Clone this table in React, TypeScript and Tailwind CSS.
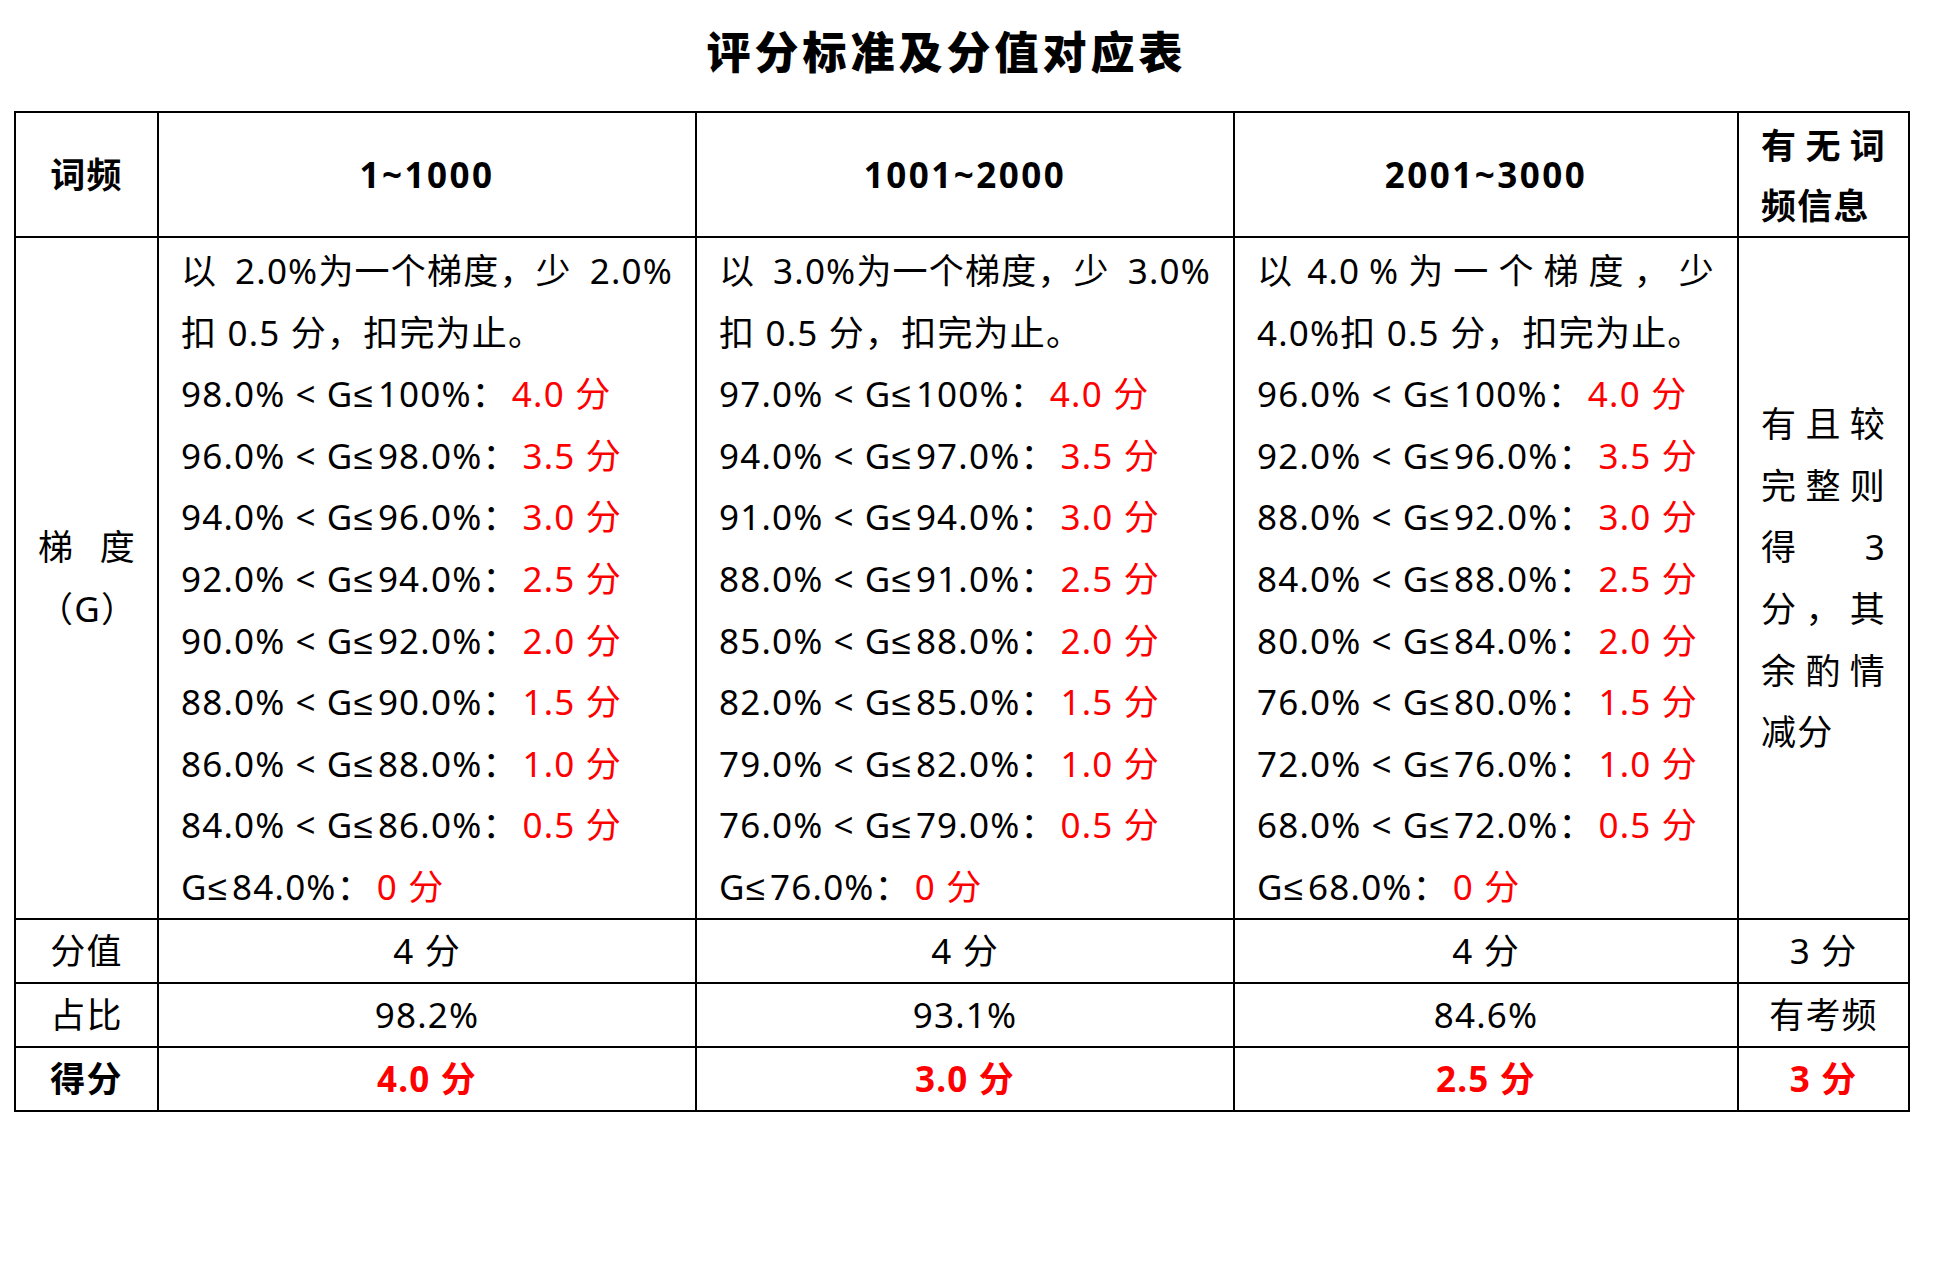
import React from "react";

type Line = { lo?: string; hi: string; score: string };

const gradeLines = (rows: [string, string][], last: string): Line[] => [
  ...rows.map(([lo, hi], i) => ({
    lo,
    hi,
    score: `${(4 - i * 0.5).toFixed(1)} 分`,
  })),
  { hi: last, score: "0 分" },
];

const col1 = gradeLines(
  [
    ["98.0", "100"],
    ["96.0", "98.0"],
    ["94.0", "96.0"],
    ["92.0", "94.0"],
    ["90.0", "92.0"],
    ["88.0", "90.0"],
    ["86.0", "88.0"],
    ["84.0", "86.0"],
  ],
  "84.0"
);

const col2 = gradeLines(
  [
    ["97.0", "100"],
    ["94.0", "97.0"],
    ["91.0", "94.0"],
    ["88.0", "91.0"],
    ["85.0", "88.0"],
    ["82.0", "85.0"],
    ["79.0", "82.0"],
    ["76.0", "79.0"],
  ],
  "76.0"
);

const col3 = gradeLines(
  [
    ["96.0", "100"],
    ["92.0", "96.0"],
    ["88.0", "92.0"],
    ["84.0", "88.0"],
    ["80.0", "84.0"],
    ["76.0", "80.0"],
    ["72.0", "76.0"],
    ["68.0", "72.0"],
  ],
  "68.0"
);

const cell = "border-2 border-black px-[22px] text-center align-middle";
const red = "text-[#ff0000]";

const GradeCell = ({ head, lines }: { head: React.ReactNode; lines: Line[] }) => (
  <td className="border-2 border-black px-[22px] pt-[2px] align-top text-left">
    {head}
    {lines.map((l) => (
      <div key={l.hi + l.score} className="whitespace-nowrap">
        {l.lo && (
          <>
            {l.lo}%<span className="px-[10px]">&lt;</span>
          </>
        )}
        G<span className="pr-[4px]">≤</span>
        {l.hi}%<span className="inline-block w-[40px]">：</span>
        <span className={red}>{l.score}</span>
      </div>
    ))}
  </td>
);

const Spread = ({ items, className = "" }: { items: string[]; className?: string }) => (
  <div className={`flex justify-between ${className}`}>
    {items.map((t, i) => (
      <span key={i}>{t}</span>
    ))}
  </div>
);

export default function App() {
  return (
    <div className="w-[1960px] h-[1265px] bg-white text-black font-['Noto_Sans','Liberation_Sans','Noto_Sans_CJK_SC',sans-serif] text-[35px] leading-[61.6px] tracking-[1.2px]">
      <h1 className="pr-[67px] text-center font-['Noto_Sans_CJK_SC',sans-serif] text-[44px] font-black leading-[100px] tracking-[4px]">
        评分标准及分值对应表
      </h1>

      <table className="mt-[11px] ml-[14px] w-[1896px] table-fixed border-collapse">
        <colgroup>
          <col className="w-[143px]" />
          <col className="w-[538px]" />
          <col className="w-[538px]" />
          <col className="w-[504px]" />
          <col className="w-[171px]" />
        </colgroup>
        <tbody>
          <tr className="h-[125px] font-bold">
            <td className={cell}>词频</td>
            <td className={`${cell} tracking-[2.5px]`}>1~1000</td>
            <td className={`${cell} tracking-[2.5px]`}>1001~2000</td>
            <td className={`${cell} tracking-[2.5px]`}>2001~3000</td>
            <td className="border-2 border-black px-[22px] pt-[3px] text-left align-middle leading-[60px]">
              <Spread items={["有", "无", "词"]} />
              <div>频信息</div>
            </td>
          </tr>

          <tr className="h-[682px]">
            <td className={cell}>
              <Spread items={["梯", "度"]} className="mx-auto w-[98px]" />
              <div>（G）</div>
            </td>
            <GradeCell
              head={
                <>
                  <Spread items={["以", "2.0%为一个梯度，少", "2.0%"]} />
                  <div>扣 0.5 分，扣完为止。</div>
                </>
              }
              lines={col1}
            />
            <GradeCell
              head={
                <>
                  <Spread items={["以", "3.0%为一个梯度，少", "3.0%"]} />
                  <div>扣 0.5 分，扣完为止。</div>
                </>
              }
              lines={col2}
            />
            <GradeCell
              head={
                <>
                  <div className="flex">
                    <span className="mr-[14px]">以</span>
                    <Spread
                      items={["4.0", "%", "为", "一", "个", "梯", "度", "，", "少"]}
                      className="flex-1"
                    />
                  </div>
                  <div>4.0%扣 0.5 分，扣完为止。</div>
                </>
              }
              lines={col3}
            />
            <td className="border-2 border-black px-[22px] text-left align-middle">
              <Spread items={["有", "且", "较"]} />
              <Spread items={["完", "整", "则"]} />
              <Spread items={["得", "3"]} />
              <Spread items={["分", "，", "其"]} />
              <Spread items={["余", "酌", "情"]} />
              <div>减分</div>
            </td>
          </tr>

          <tr className="h-[64px]">
            <td className={cell}>分值</td>
            <td className={cell}>4 分</td>
            <td className={cell}>4 分</td>
            <td className={cell}>4 分</td>
            <td className={cell}>3 分</td>
          </tr>

          <tr className="h-[64px]">
            <td className={cell}>占比</td>
            <td className={cell}>98.2%</td>
            <td className={cell}>93.1%</td>
            <td className={cell}>84.6%</td>
            <td className={cell}>有考频</td>
          </tr>

          <tr className="h-[64px] font-bold">
            <td className={cell}>得分</td>
            <td className={`${cell} ${red}`}>4.0 分</td>
            <td className={`${cell} ${red}`}>3.0 分</td>
            <td className={`${cell} ${red}`}>2.5 分</td>
            <td className={`${cell} ${red}`}>3 分</td>
          </tr>
        </tbody>
      </table>
    </div>
  );
}
